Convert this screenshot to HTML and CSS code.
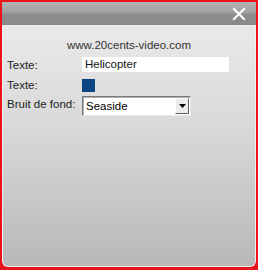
FILE: index.html
```html
<!DOCTYPE html>
<html>
<head>
<meta charset="utf-8">
<link rel="stylesheet" href="styles.css">
</head>
<body>
<div class="frame">
  <div class="titlebar">
    <svg class="close" width="14" height="14" viewBox="0 0 14 14"><path d="M2 2 L12 12 M12 2 L2 12" stroke="#fff" stroke-width="2.2" stroke-linecap="square"/></svg>
  </div>
  <div class="panel">
    <div class="site">www.20cents-video.com</div>
    <div class="row r1">
      <span class="label">Texte:</span>
      <div class="input">Helicopter</div>
    </div>
    <div class="row r2">
      <span class="label">Texte:</span>
      <div class="swatch"></div>
    </div>
    <div class="row r3">
      <span class="label">Bruit de fond:</span>
      <div class="select"><span class="val">Seaside</span><span class="btn"><svg width="7" height="4" viewBox="0 0 7 4"><path d="M0 0 H7 L3.5 4 Z" fill="#000"/></svg></span></div>
    </div>
  </div>
</div>
</body>
</html>
```
FILE: styles.css
```css
html, body { margin: 0; padding: 0; }
body { width: 258px; height: 270px; background: #e8141c; font-family: "Liberation Sans", Arial, sans-serif; }
.frame { position: relative; margin: 0; padding: 2px 2px 3px 2px; box-sizing: border-box; width: 258px; height: 270px; display: flex; flex-direction: column; }
.titlebar { height: 23px; background: linear-gradient(#b4b4b4, #a0a0a0 45%, #8c8c8c 55%, #8a8a8a); display: flex; justify-content: flex-end; align-items: center; padding-right: 10px; }
.close { display: block; }
.panel { flex: 1; background: linear-gradient(#e9e9e9, #dadada 40%, #b8b8b8); border: 1px solid #f0f0f0; border-top: none; border-radius: 0 0 6px 6px; padding: 0 4px; color: #222; font-size: 11.5px; }
.site { text-align: center; margin-top: 13px; height: 14px; line-height: 14px; color: #333; }
.row { display: flex; align-items: center; }
.label { width: 75px; }
.r1 { margin-top: 5px; height: 15px; }
.input { width: 144px; height: 15px; background: #fff; line-height: 15px; padding-left: 3px; color: #111; }
.r2 { margin-top: 6px; height: 14px; }
.swatch { width: 13px; height: 13px; background: #0d4483; }
.r3 { margin-top: 3px; height: 20px; align-items: flex-start; }
.r3 .label { padding-top: 3px; }
.select { margin-top: 1px; width: 109px; height: 20px; box-sizing: border-box; background: #fff; border: 1px solid; border-color: #7a7a7a #e8e8e8 #e8e8e8 #7a7a7a; box-shadow: inset 1px 1px 0 #b0b0b0; display: flex; align-items: center; justify-content: space-between; }
.val { padding-left: 3px; color: #000; }
.btn { width: 14px; height: 16px; margin-right: 1px; background: #ececec; border: 1px solid; border-color: #fff #606060 #606060 #fff; box-sizing: border-box; display: flex; align-items: center; justify-content: center; }
.btn svg { display: block; }
```
